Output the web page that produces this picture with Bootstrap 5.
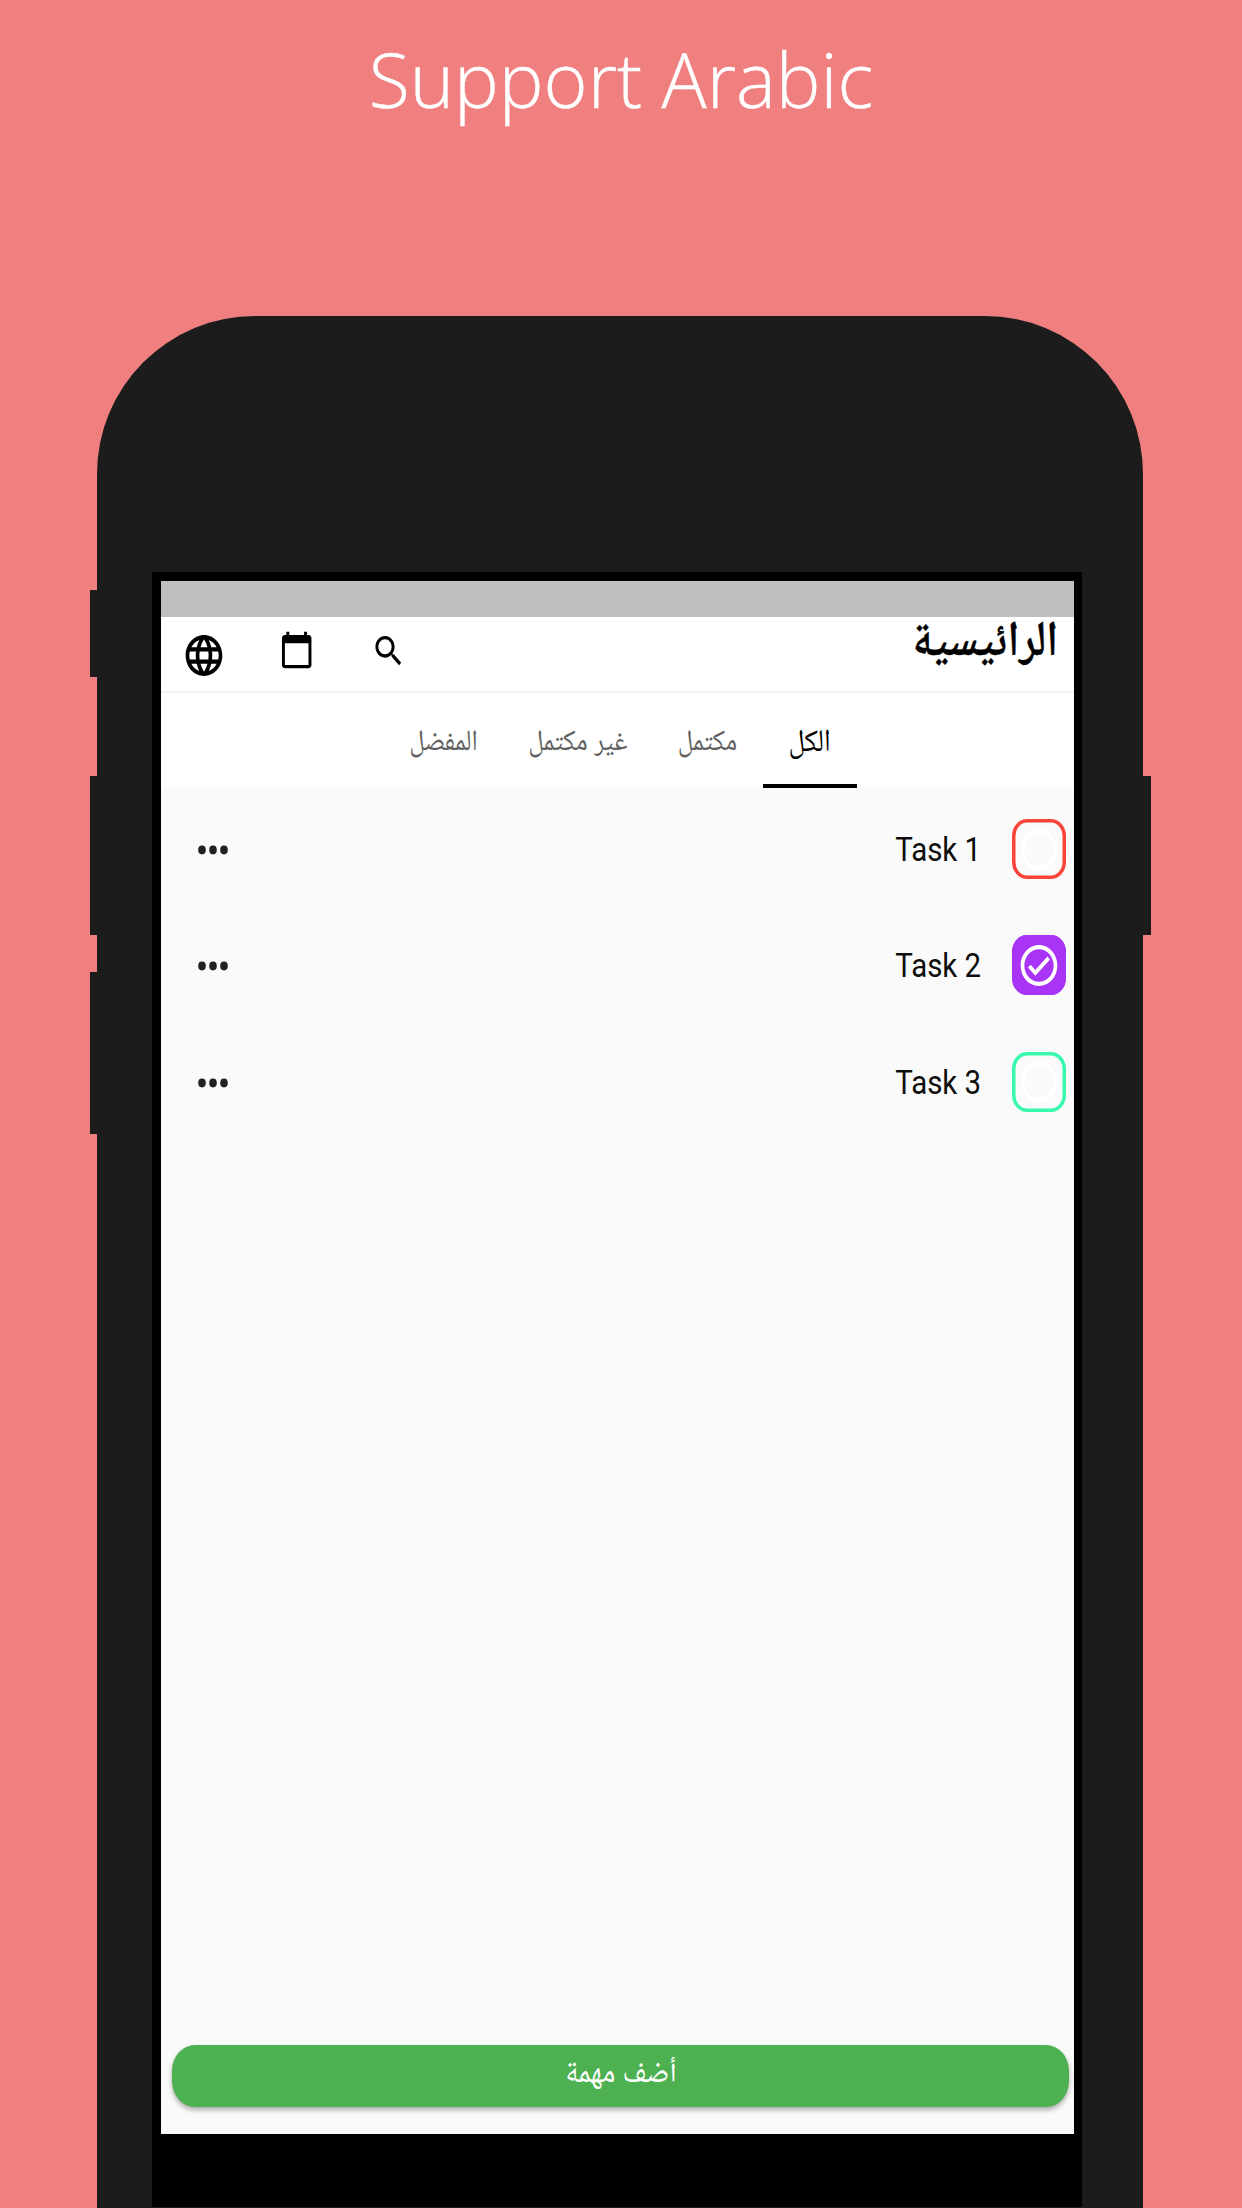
<!DOCTYPE html>
<html lang="ar">
<head>
<meta charset="utf-8">
<title>Support Arabic</title>
<meta name="viewport" content="width=device-width, initial-scale=1">
<link href="https://cdn.jsdelivr.net/npm/bootstrap@5.3.0/dist/css/bootstrap.min.css" rel="stylesheet">
<style>
  body { background: #f08080; width: 1242px; height: 2208px; overflow: hidden; font-family: Roboto, "Noto Naskh Arabic UI", "Noto Sans Arabic", "Noto Sans", "DejaVu Sans", sans-serif; }
  .promo-title { height: 316px; padding-top: 28px; font: 300 75.2px/102px "Open Sans", sans-serif; color: #fff; -webkit-text-stroke: .4px #fff; }
  .promo-title span, .fit { display: inline-block; white-space: nowrap; }
  .phone { width: 1045.5px; height: 1892px; margin-left: 97px; padding: 256px 60.5px 0 55px; background: #1c1c1c; border-radius: 158px 158px 0 0; }
  .side-key { position: absolute; width: 9px; background: #1c1c1c; }
  .key-l { left: 90px; } .key-r { left: 1142px; }
  .bezel { height: 1635px; background: #000; padding: 9px 8.5px 0; }
  .screen { height: 1553px; background: #fafafa; }
  .statusbar { height: 36px; background: #bfbfbf; }
  .appbar { height: 76px; background: #fff; border-bottom: 2px solid #f2f2f2; padding: 0 15px 0 21px; }
  .appbar svg { display: block; }
  .fit { transform: scaleX(.889); }
  .page-name { font-size: 49.5px; line-height: 57px; font-weight: 600; -webkit-text-stroke: .4px #000; }
  .page-name .fit { transform-origin: right center; }
  .tabs-row { height: 95px; background: #fff; padding-right: 217px; font-size: 29.4px; color: #616161; }
  .tab-cell { height: 95px; line-height: 103px; white-space: nowrap; }
  .tab-cell.current { color: #000; border-bottom: 4px solid #000; font-size: 31.5px; }
  .task-row { height: 116.3px; padding: 0 8px 0 36px; }
  .tick { width: 54px; height: 60px; color: transparent; box-shadow: inset 0 0 0 3.5px currentColor; border-radius: 15px / 17px; }
  .tick-red { color: #f9443a; }
  .tick-violet { color: #a835f6; background: #a835f6; }
  .tick-mint { color: #38f8ad; }
  .tick svg { width: 44px; height: 49px; flex: none; }
  .task-name { font: 400 33.3px/40px Roboto, sans-serif; color: #0d0d0d; transform: scaleX(.885); transform-origin: right; margin-right: 30.5px; padding-top: 2px; }
  .add-btn { height: 62px; margin: 0 4.5px 27px 11.5px; background: #4db051; border-radius: 23px / 26px; color: #fff; box-shadow: 0 3px 5px rgba(0,0,0,.32); font-size: 33px; line-height: 60px; }
</style>
</head>
<body>
<h1 class="promo-title text-center mb-0"><span>Support Arabic</span></h1>
<i class="side-key key-l" style="top:590px;height:87px"></i>
<i class="side-key key-l" style="top:776px;height:159px"></i>
<i class="side-key key-l" style="top:972px;height:162px"></i>
<i class="side-key key-r" style="top:776px;height:159px"></i>
<main class="phone">
 <div class="bezel">
  <div class="screen d-flex flex-column" dir="rtl">
   <div class="statusbar"></div>
   <header class="appbar d-flex justify-content-between">
     <div class="page-name text-black"><span class="fit">الرائيسية</span></div>
     <div class="d-flex" dir="ltr">
       <svg width="44" height="49" viewBox="0 0 24 24" preserveAspectRatio="none" style="margin-top:14px"><path d="M11.99 2C6.47 2 2 6.48 2 12s4.47 10 9.99 10C17.52 22 22 17.52 22 12S17.52 2 11.99 2zm6.93 6h-2.95c-.32-1.25-.78-2.45-1.38-3.56 1.84.63 3.37 1.91 4.33 3.56zM12 4.04c.83 1.2 1.48 2.53 1.91 3.96h-3.82c.43-1.43 1.08-2.76 1.91-3.96zM4.26 14C4.1 13.36 4 12.69 4 12s.1-1.36.26-2h3.38c-.08.66-.14 1.32-.14 2s.06 1.34.14 2H4.26zm.82 2h2.95c.32 1.25.78 2.45 1.38 3.56-1.84-.63-3.37-1.9-4.33-3.56zm2.95-8H5.08c.96-1.66 2.49-2.93 4.33-3.56C8.81 5.55 8.35 6.75 8.03 8zM12 19.96c-.83-1.2-1.48-2.53-1.91-3.96h3.82c-.43 1.43-1.08 2.76-1.91 3.96zM14.34 14H9.66c-.09-.66-.16-1.32-.16-2s.07-1.35.16-2h4.68c.09.65.16 1.32.16 2s-.07 1.34-.16 2zm.25 5.56c.6-1.11 1.06-2.31 1.38-3.56h2.95c-.96 1.65-2.49 2.93-4.33 3.56zM16.36 14c.08-.66.14-1.32.14-2s-.06-1.34-.14-2h3.38c.16.64.26 1.31.26 2s-.1 1.36-.26 2h-3.38z"/></svg>
       <svg width="35.4" height="40" viewBox="0 0 24 24" preserveAspectRatio="none" style="margin:13px 0 0 53px"><path d="M20 3h-1V1h-2v2H7V1H5v2H4c-1.1 0-2 .9-2 2v16c0 1.1.9 2 2 2h16c1.1 0 2-.9 2-2V5c0-1.1-.9-2-2-2zm0 18H4V8h16v13z"/></svg>
       <svg width="35.4" height="40" viewBox="0 0 24 24" preserveAspectRatio="none" style="margin:13.5px 0 0 57.5px"><path d="M15.5 14h-.79l-.28-.27C15.41 12.59 16 11.11 16 9.5 16 5.91 13.09 3 9.5 3S3 5.91 3 9.5 5.91 16 9.5 16c1.61 0 3.09-.59 4.23-1.57l.27.28v.79l5 4.99L20.49 19l-4.99-5zm-6 0C7.01 14 5 11.99 5 9.5S7.01 5 9.5 5 14 7.01 14 9.5 11.99 14 9.5 14z"/></svg>
     </div>
   </header>
   <nav class="tabs-row d-flex">
     <div class="tab-cell current d-flex justify-content-center" style="width:94px"><span class="fit">الكل</span></div>
     <div class="tab-cell d-flex justify-content-center" style="width:110px"><span class="fit">مكتمل</span></div>
     <div class="tab-cell d-flex justify-content-center" style="width:150px"><span class="fit">غير مكتمل</span></div>
     <div class="tab-cell d-flex justify-content-center" style="width:118px"><span class="fit">المفضل</span></div>
   </nav>
   <section class="flex-grow-1" style="padding-top:3px">
     <div class="task-row d-flex align-items-center">
       <div class="tick tick-red d-flex align-items-center justify-content-center"><svg viewBox="0 0 24 24" preserveAspectRatio="none"><circle cx="12" cy="12" r="9" fill="none" stroke="#fff" stroke-width="2"/></svg></div>
       <div class="task-name" dir="ltr">Task 1</div>
       <svg class="me-auto" width="32" height="12" viewBox="0 0 32 12"><g fill="#212121"><ellipse cx="5" cy="7" rx="3.8" ry="4.4"/><ellipse cx="16" cy="7" rx="3.8" ry="4.4"/><ellipse cx="27" cy="7" rx="3.8" ry="4.4"/></g></svg>
     </div>
     <div class="task-row d-flex align-items-center">
       <div class="tick tick-violet d-flex align-items-center justify-content-center"><svg viewBox="0 0 24 24" preserveAspectRatio="none" fill="#fff"><path d="M16.59 7.58L10 14.17l-2.59-2.58L6 13l4 4 8-8zM12 2C6.48 2 2 6.48 2 12s4.48 10 10 10 10-4.48 10-10S17.52 2 12 2zm0 18c-4.42 0-8-3.58-8-8s3.58-8 8-8 8 3.58 8 8-3.58 8-8 8z"/></svg></div>
       <div class="task-name" dir="ltr">Task 2</div>
       <svg class="me-auto" width="32" height="12" viewBox="0 0 32 12"><g fill="#212121"><ellipse cx="5" cy="7" rx="3.8" ry="4.4"/><ellipse cx="16" cy="7" rx="3.8" ry="4.4"/><ellipse cx="27" cy="7" rx="3.8" ry="4.4"/></g></svg>
     </div>
     <div class="task-row d-flex align-items-center">
       <div class="tick tick-mint d-flex align-items-center justify-content-center"><svg viewBox="0 0 24 24" preserveAspectRatio="none"><circle cx="12" cy="12" r="9" fill="none" stroke="#fff" stroke-width="2"/></svg></div>
       <div class="task-name" dir="ltr">Task 3</div>
       <svg class="me-auto" width="32" height="12" viewBox="0 0 32 12"><g fill="#212121"><ellipse cx="5" cy="7" rx="3.8" ry="4.4"/><ellipse cx="16" cy="7" rx="3.8" ry="4.4"/><ellipse cx="27" cy="7" rx="3.8" ry="4.4"/></g></svg>
     </div>
   </section>
   <div class="add-btn text-center"><span class="fit">أضف مهمة</span></div>
  </div>
 </div>
</main>
<script src="https://cdn.jsdelivr.net/npm/bootstrap@5.3.0/dist/js/bootstrap.bundle.min.js"></script>
</body>
</html>
